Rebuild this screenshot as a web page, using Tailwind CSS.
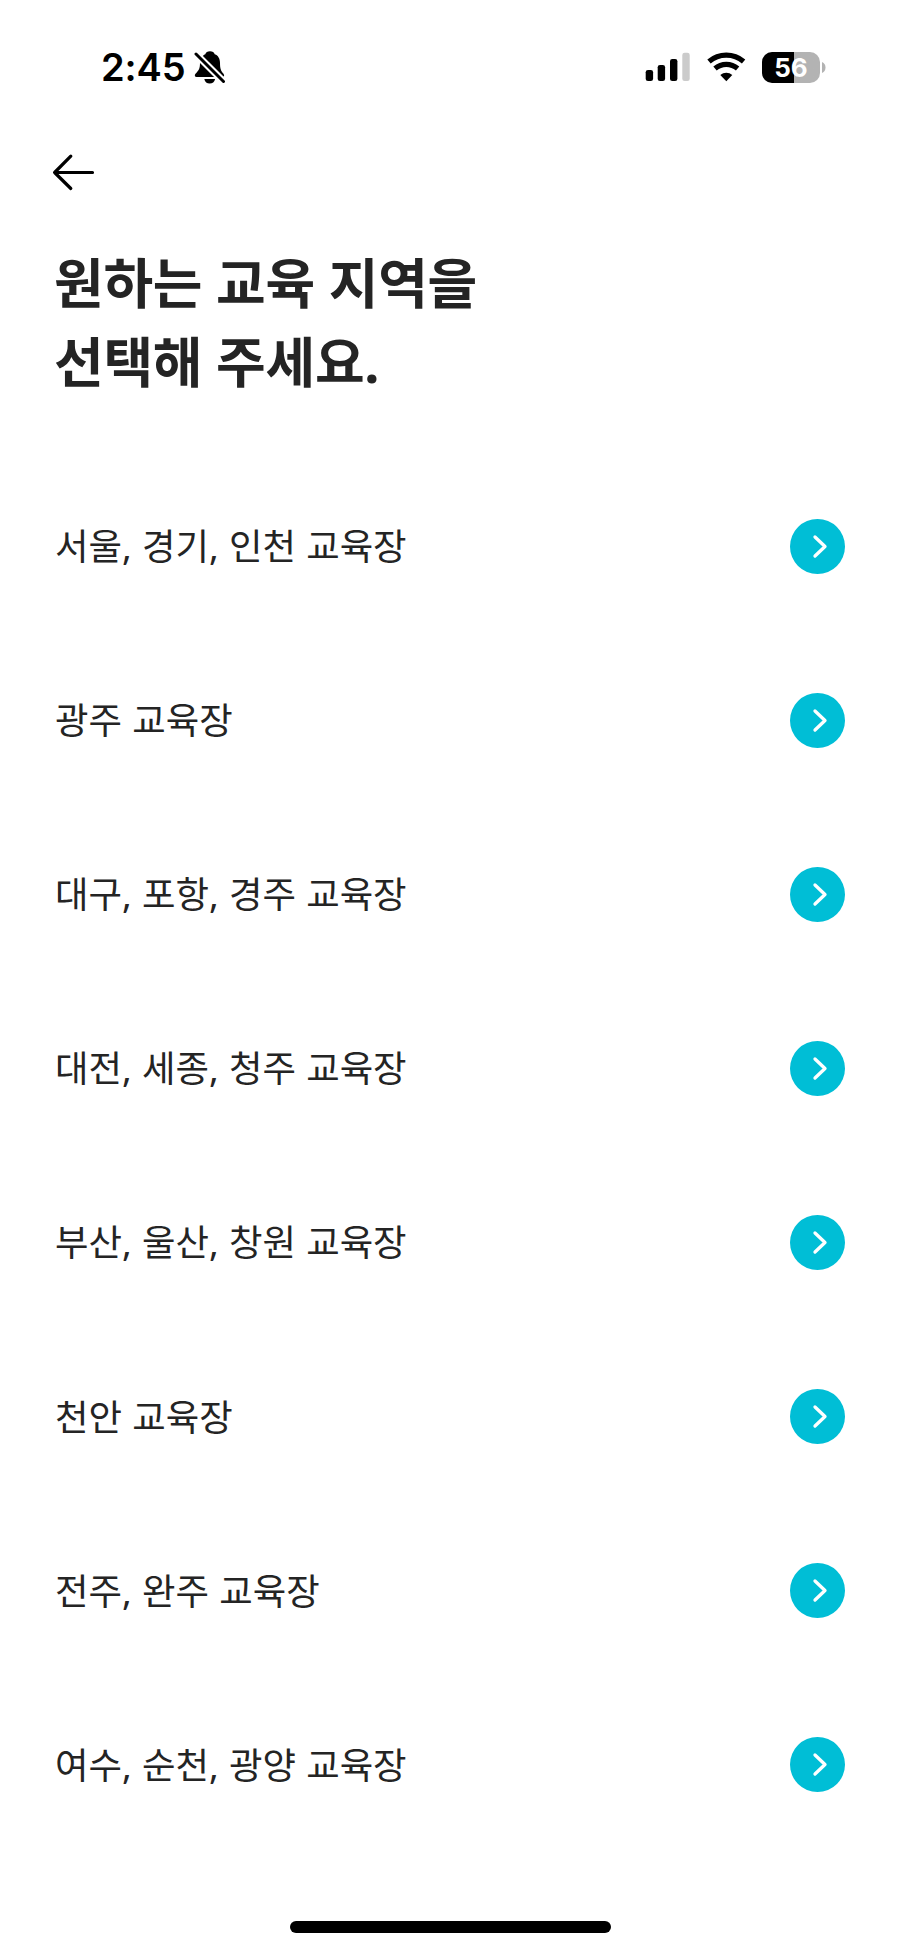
<!DOCTYPE html>
<html lang="ko">
  <head>
    <meta charset="UTF-8" />
    <title>교육 지역 선택</title>
    <meta name="viewport" content="width=device-width, initial-scale=1.0" />
    <script src="https://cdn.jsdelivr.net/npm/@tailwindcss/browser@4"></script>
  </head>
  <body class="bg-white">
    <div class="w-[900px] h-[1951px] flex flex-col overflow-hidden font-['Noto_Sans','Noto_Sans_CJK_KR',sans-serif] text-[#242424]">
      <!-- status bar -->
      <header class="h-[134px] shrink-0 flex items-start justify-between pl-[101px] pr-[74px] pt-[50px] text-black">
        <div class="flex items-center h-[34px]">
          <span class="w-[85px] whitespace-nowrap font-['Inter',sans-serif] font-semibold text-[38px] leading-[34px] tracking-[-0.1px]">2:45</span>
          <svg class="ml-2 w-8 h-[34px]" viewBox="0 0 32 34">
            <path d="M16 1.200c-2.500 0-4.200 1.300-4.700 3C8 5.600 6 9 6 13c0 6-1.500 7.500-4.500 10.800-1.200 1.400-.8 3.200 1.200 3.200h25.500c2 0 2.500-1.700 1.300-3.200-2.500-3-3.500-4.800-3.500-10.800 0-4-1.500-7.500-5.300-8.800-.5-1.700-2.200-3-4.700-3z" />
            <path d="M10.300 29h10.800c-.6 3-2.700 4.600-5.400 4.600s-4.800-1.600-5.400-4.600z" />
            <path d="M-1 1 32 34" stroke="#fff" stroke-width="7" />
            <path d="M2 4 29.500 31.500" stroke="#000" stroke-width="3" stroke-linecap="round" />
          </svg>
        </div>
        <div class="flex items-center h-[34px]">
          <svg class="w-[46px] h-[34px]" viewBox="0 0 46 34">
            <rect x="1.700" y="20" width="7.400" height="11" rx="2.300" />
            <rect x="13.700" y="15" width="7.400" height="16" rx="2.300" />
            <rect x="26" y="9" width="7.400" height="22" rx="2.300" />
            <rect x="38.300" y="2.800" width="7.400" height="28.200" rx="2.300" fill="#cbcbcb" />
          </svg>
          <svg class="ml-4 w-[40px] h-[34px]" viewBox="0 0 40 34">
            <g fill="none" stroke="#000" stroke-width="5.200">
              <path d="M3 11.500a26.800 26.800 0 0 1 34.600 0" />
              <path d="M9 18.600a17.500 17.500 0 0 1 22.600 0" />
            </g>
            <path d="M20.300 31.200 14.300 24.900a9.300 9.300 0 0 1 12 0z" />
          </svg>
          <div class="ml-4 w-[58px] h-[31px] flex items-center justify-center rounded-[10px] bg-linear-to-r from-black from-[56%] to-[#b3b3b3] to-[56%] font-['Inter',sans-serif] font-bold text-[26px] leading-[31px] text-white">56</div>
          <svg class="ml-[2px] w-1 h-[11px]" viewBox="0 0 4 11">
            <path d="M0 0c2.500 1 3.500 3 3.500 5.500S2.500 10 0 11z" fill="#b3b3b3" />
          </svg>
        </div>
      </header>

      <nav class="h-[76px] shrink-0 pl-[50px] pt-[18px]">
        <svg class="w-[46px] h-[40px]" viewBox="0 0 46 40" fill="none" stroke="#000" stroke-width="3.200" stroke-linecap="round" stroke-linejoin="round">
          <path d="M42.500 20.500H4.600M20.800 4.200 4.600 20.500 20.800 36.500" />
        </svg>
      </nav>

      <h1 class="h-[192px] shrink-0 pl-[54px] pt-[34px] font-bold text-[54px] leading-[79px] tracking-[-0.25px]">원하는 교육 지역을<br />선택해 주세요.</h1>

      <ul id="region-list" class="mt-[57px] pl-[55px] pr-[55px]"></ul>

      <div class="mt-auto mb-[18px] mx-auto w-[321px] h-[12px] shrink-0 rounded-full bg-black"></div>
    </div>

    <script>
      const regions = [
        '서울, 경기, 인천 교육장',
        '광주 교육장',
        '대구, 포항, 경주 교육장',
        '대전, 세종, 청주 교육장',
        '부산, 울산, 창원 교육장',
        '천안 교육장',
        '전주, 완주 교육장',
        '여수, 순천, 광양 교육장',
      ];

      const list = document.getElementById('region-list');

      regions.forEach((name) => {
        const li = document.createElement('li');
        li.className = 'h-[174.1px] flex items-center justify-between text-[36.4px] leading-[56px] [word-spacing:0.8px]';
        li.innerHTML = `
          <span>${name}</span>
          <svg class="w-[55px] h-[55px]" viewBox="0 0 55 55" fill="none">
            <circle cx="27.500" cy="27.500" r="27.500" fill="#00bed6" />
            <path d="M25 18 35 27.500 25 37" stroke="#fff" stroke-width="3.300" stroke-linecap="round" stroke-linejoin="round" />
          </svg>
        `;
        list.appendChild(li);
      });
    </script>
  </body>
</html>
